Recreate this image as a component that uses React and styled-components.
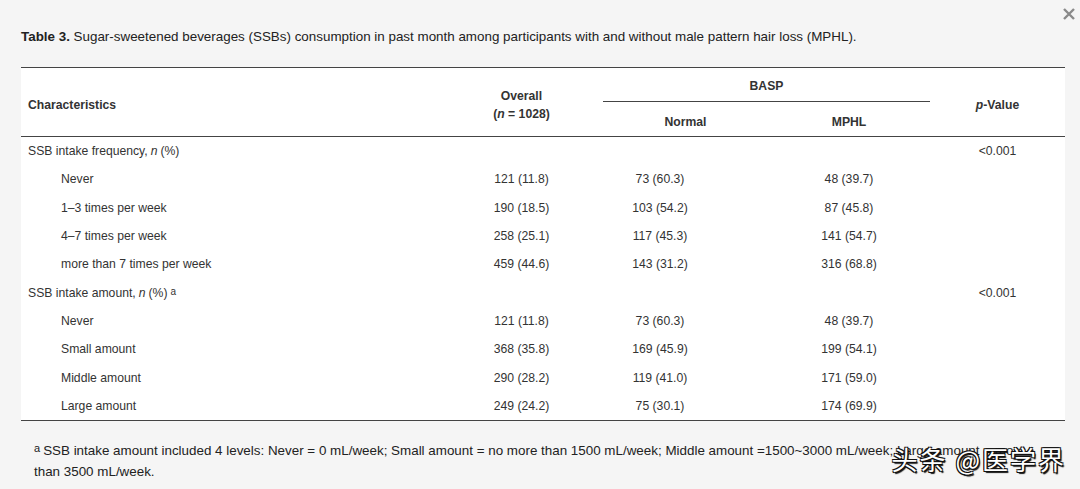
import React from "react";
import styled, { createGlobalStyle } from "styled-components";

const GlobalStyle = createGlobalStyle`
  html, body {
    margin: 0;
    padding: 0;
    background: #f5f5f5;
  }
  body {
    font-family: "Liberation Sans", Arial, sans-serif;
    color: #333;
  }
`;

const Page = styled.div`
  position: relative;
  width: 1080px;
  height: 489px;
  overflow: hidden;
  padding: 29px 15px 0 21px;
  box-sizing: border-box;
  background: #f5f5f5;
`;

const CloseButton = styled.button`
  position: absolute;
  top: 6px;
  right: 3px;
  width: 16px;
  height: 18px;
  padding: 0;
  border: none;
  background: transparent;
  color: #8a8a8a;
  cursor: pointer;
`;

const Caption = styled.p`
  margin: 0;
  font-size: 13.4px;
  line-height: 16px;
  color: #222;

  b {
    font-weight: bold;
  }
`;

const Table = styled.div`
  margin-top: 22px;
  background: #fff;
  border-top: 1px solid #444;
  border-bottom: 1px solid #444;
  display: grid;
  grid-template-columns: 419px 163px 165px 162px 1fr;
  font-size: 12.2px;
  color: #333;
`;

const HeadCell = styled.div`
  grid-column: ${(p) => p.$col || "auto"};
  grid-row: ${(p) => p.$row || "auto"};
  display: flex;
  align-items: ${(p) => p.$align || "center"};
  justify-content: ${(p) => (p.$left ? "flex-start" : "center")};
  text-align: ${(p) => (p.$left ? "left" : "center")};
  padding-left: ${(p) => (p.$left ? "7px" : "0")};
  font-weight: bold;
  line-height: 18px;
  border-bottom: ${(p) => (p.$rule ? "1px solid #444" : "none")};
  height: ${(p) => p.$h || "auto"};
  box-sizing: border-box;

  i {
    font-style: italic;
  }
`;

const HeadText = styled.span`
  padding-top: ${(p) => p.$top || 0}px;
  padding-bottom: ${(p) => p.$bottom || 0}px;
`;

const HeadRule = styled.div`
  grid-column: 1 / -1;
  grid-row: 3;
  border-bottom: 1px solid #444;
`;

const Cell = styled.div`
  height: 28.3px;
  display: flex;
  align-items: center;
  justify-content: ${(p) => (p.$left ? "flex-start" : "center")};
  padding-left: ${(p) => (p.$indent ? "40px" : p.$left ? "7px" : "0")};
  padding-right: ${(p) => (p.$shift ? "51px" : "0")};
  white-space: nowrap;

  i {
    font-style: italic;
    margin: 0 3px;
  }
  sup {
    font-size: 10px;
    margin-left: 3px;
    position: relative;
    top: -1px;
  }
`;

const Footnote = styled.p`
  margin: 19px 0 0 13px;
  font-size: 13.4px;
  line-height: 21px;
  color: #222;
  width: 1005px;

  sup {
    font-size: 11px;
    margin-right: 3px;
    vertical-align: 3px;
    line-height: 0;
  }
`;

const Watermark = styled.div`
  position: absolute;
  right: 14px;
  bottom: 12px;
  font-family: "Noto Sans CJK SC", sans-serif;
  font-size: 26px;
  letter-spacing: 2px;
  color: #fff;
  text-shadow: -1px -1px 0 #111, 1px -1px 0 #111, -1px 1px 0 #111, 1px 1px 0 #111,
    1.5px 1.5px 1px #111;
  pointer-events: none;
`;

const rows = [
  { label: <>SSB intake frequency,<i>n</i>(%)</>, group: true, p: "<0.001" },
  { label: "Never", overall: "121 (11.8)", normal: "73 (60.3)", mphl: "48 (39.7)" },
  { label: "1–3 times per week", overall: "190 (18.5)", normal: "103 (54.2)", mphl: "87 (45.8)" },
  { label: "4–7 times per week", overall: "258 (25.1)", normal: "117 (45.3)", mphl: "141 (54.7)" },
  { label: "more than 7 times per week", overall: "459 (44.6)", normal: "143 (31.2)", mphl: "316 (68.8)" },
  { label: <>SSB intake amount,<i>n</i>(%)<sup>a</sup></>, group: true, p: "<0.001" },
  { label: "Never", overall: "121 (11.8)", normal: "73 (60.3)", mphl: "48 (39.7)" },
  { label: "Small amount", overall: "368 (35.8)", normal: "169 (45.9)", mphl: "199 (54.1)" },
  { label: "Middle amount", overall: "290 (28.2)", normal: "119 (41.0)", mphl: "171 (59.0)" },
  { label: "Large amount", overall: "249 (24.2)", normal: "75 (30.1)", mphl: "174 (69.9)" },
];

export default function App() {
  return (
    <>
      <GlobalStyle />
      <Page>
        <CloseButton aria-label="Close">
          <svg width="14" height="14" viewBox="0 0 14 14">
            <path d="M2 2 L12 12 M12 2 L2 12" stroke="currentColor" strokeWidth="2.4" />
          </svg>
        </CloseButton>
        <Caption>
          <b>Table 3.</b> Sugar-sweetened beverages (SSBs) consumption in past month among
          participants with and without male pattern hair loss (MPHL).
        </Caption>
        <Table>
          <HeadCell $col="1" $row="1 / 3" $left>
            <HeadText $top={5}>Characteristics</HeadText>
          </HeadCell>
          <HeadCell $col="2" $row="1 / 3">
            <HeadText $top={5}>
              Overall
              <br />
              (<i>n</i> = 1028)
            </HeadText>
          </HeadCell>
          <HeadCell $col="3 / 5" $row="1" $rule $h="34px" $align="flex-end">
            <HeadText $bottom={6}>BASP</HeadText>
          </HeadCell>
          <HeadCell $col="3" $row="2" $h="34px">
            <HeadText $top={5}>Normal</HeadText>
          </HeadCell>
          <HeadCell $col="4" $row="2" $h="34px">
            <HeadText $top={5}>MPHL</HeadText>
          </HeadCell>
          <HeadCell $col="5" $row="1 / 3">
            <HeadText $top={5}>
              <i>p</i>-Value
            </HeadText>
          </HeadCell>
          <HeadRule />
          {rows.map((r, i) => (
            <React.Fragment key={i}>
              <Cell $left $indent={!r.group}>{r.label}</Cell>
              <Cell>{r.overall}</Cell>
              <Cell $shift>{r.normal}</Cell>
              <Cell>{r.mphl}</Cell>
              <Cell>{r.p}</Cell>
            </React.Fragment>
          ))}
        </Table>
        <Footnote>
          <sup>a</sup>SSB intake amount included 4 levels: Never = 0 mL/week; Small amount = no
          more than 1500 mL/week; Middle amount =1500~3000 mL/week; Large amount = more
          <br />
          than 3500 mL/week.
        </Footnote>
        <Watermark>头条 @医学界</Watermark>
      </Page>
    </>
  );
}
